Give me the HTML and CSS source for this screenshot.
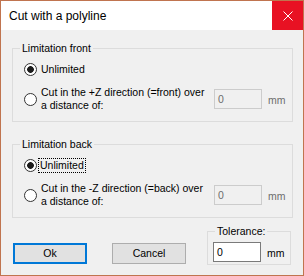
FILE: index.html
```html
<!DOCTYPE html>
<html lang="en">

<head>
    <meta charset="UTF-8" />
    <title>Cut with a polyline</title>
    <link rel="stylesheet" href="styles.css">
</head>

<body>
    <div class="window">
        <!-- Title bar -->
        <div class="titlebar">
            <div class="title">Cut with a polyline</div>
            <div class="close">
                <svg width="10" height="10" viewBox="0 0 10 10">
                    <path d="M0.5 0.5 L9.5 9.5 M9.5 0.5 L0.5 9.5" stroke="#fff" stroke-width="1" fill="none" />
                </svg>
            </div>
        </div>

        <div class="content">
            <fieldset class="group">
                <legend>Limitation front</legend>
                <div class="option">
                    <span class="radio checked"></span>
                    <span class="label">Unlimited</span>
                </div>
                <div class="option second">
                    <span class="radio"></span>
                    <span class="label wide">Cut in the +Z direction (=front) over a distance of:</span>
                    <span class="field disabled">0</span>
                    <span class="unit disabled">mm</span>
                </div>
            </fieldset>

            <fieldset class="group back">
                <legend>Limitation back</legend>
                <div class="option">
                    <span class="radio checked"></span>
                    <span class="label focus">Unlimited</span>
                </div>
                <div class="option second">
                    <span class="radio"></span>
                    <span class="label wide">Cut in the -Z direction (=back) over a distance of:</span>
                    <span class="field disabled">0</span>
                    <span class="unit disabled">mm</span>
                </div>
            </fieldset>

            <div class="bottom">
                <div class="button default">Ok</div>
                <div class="button">Cancel</div>
                <fieldset class="group tolerance">
                    <legend>Tolerance:</legend>
                    <div class="tol-row">
                        <span class="field">0</span>
                        <span class="unit">mm</span>
                    </div>
                </fieldset>
            </div>
        </div>
    </div>
</body>

</html>
```

FILE: styles.css
```css
html,
body {
    margin: 0;
    padding: 0;
    background: #f0f0f0;
    font-family: 'Liberation Sans', Arial, sans-serif;
    font-size: 10.5px;
    color: #000;
}

* {
    box-sizing: border-box;
}

.window {
    width: 304px;
    height: 276px;
    border: 1px solid #c0744f;
    background: #f0f0f0;
    display: flex;
    flex-direction: column;
}

/* Title bar */
.titlebar {
    height: 29px;
    background: #fff;
    display: flex;
    align-items: center;
}

.title {
    flex: 1;
    padding-left: 8px;
    font-size: 12px;
}

.close {
    width: 31px;
    height: 29px;
    background: #e81123;
    display: flex;
    align-items: center;
    justify-content: center;
}

.content {
    flex: 1;
    padding: 12px 10px 0 11px;
}

/* Group boxes */
.group {
    margin: 0;
    padding: 8px 0 9px 0;
    border: 1px solid #dcdcdc;
    min-width: 0;
}

.group legend {
    margin-left: 7px;
    padding: 0 2px;
    line-height: 13px;
}

.group.back {
    margin-top: 16px;
}

.option {
    display: flex;
    align-items: center;
    padding-left: 11px;
}

.option.second {
    margin-top: 10px;
}

.radio {
    flex: none;
    width: 13px;
    height: 13px;
    border: 1px solid #333;
    border-radius: 50%;
    background: #fff;
}

.radio.checked {
    background: radial-gradient(circle, #1a1a1a 0, #1a1a1a 3px, #fff 3.7px);
}

.label {
    margin-left: 4px;
    line-height: 13px;
}

.label.focus {
    margin-left: 2px;
    padding: 0 1px;
    outline: 1px dotted #000;
}

.label.wide {
    flex: 0 0 168px;
}

.field {
    flex: none;
    width: 48px;
    height: 20px;
    margin-left: 5px;
    padding-left: 3px;
    line-height: 18px;
    background: #fff;
    border: 1px solid #7a7a7a;
}

.field.disabled {
    background: #f0f0f0;
    border-color: #ccc;
    color: #6d6d6d;
}

.unit {
    margin-left: 6px;
    padding-top: 2px;
}

.unit.disabled {
    color: #6d6d6d;
}

/* Buttons and tolerance */
.bottom {
    display: flex;
    align-items: flex-start;
    margin-top: 7px;
}

.button {
    width: 74px;
    height: 21px;
    margin-top: 18px;
    border: 1px solid #adadad;
    background: #e1e1e1;
    text-align: center;
    line-height: 19px;
}

.button.default {
    margin-left: 1px;
    border: 2px solid #0078d7;
    line-height: 17px;
}

.button + .button {
    margin-left: 25px;
}

.group.tolerance {
    width: 84px;
    margin-left: 21px;
    padding: 4px 0 2px 5px;
}

.group.tolerance legend {
    margin-left: 2px;
}

.tol-row {
    display: flex;
    align-items: center;
}

.tol-row .field {
    margin-left: 0;
}
```
